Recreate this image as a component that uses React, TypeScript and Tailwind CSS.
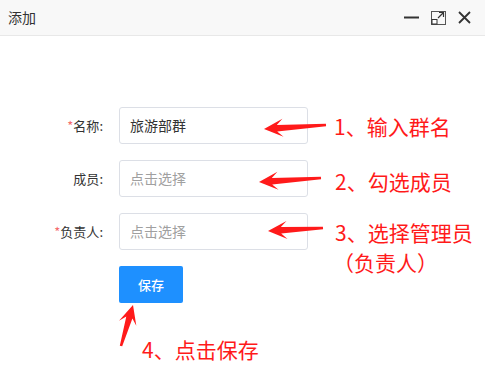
import React from "react";

type Pt = [number, number];

// builds a tapered red annotation arrow from tip to tail
function arrowPoints(tip: Pt, tail: Pt, head = 19, wing = 9, neck = 3.2, end = 1.2) {
  const dx = tail[0] - tip[0];
  const dy = tail[1] - tip[1];
  const len = Math.hypot(dx, dy);
  const ux = dx / len;
  const uy = dy / len;
  const nx = -uy;
  const ny = ux;
  const at = (d: number, s: number): Pt => [tip[0] + ux * d + nx * s, tip[1] + uy * d + ny * s];
  const pts: Pt[] = [
    tip,
    at(head, wing),
    at(head - 6, neck),
    at(len, end),
    at(len, -end),
    at(head - 6, -neck),
    at(head, -wing),
  ];
  return pts.map((p) => p.map((v) => v.toFixed(1)).join(",")).join(" ");
}

const arrows: [Pt, Pt][] = [
  [[264, 129], [326, 125]],
  [[259, 182], [321, 178]],
  [[268, 231], [323, 228]],
  [[133, 305], [121, 346]],
];

function Field({ label, required, value, placeholder }: { label: string; required?: boolean; value?: string; placeholder?: string }) {
  return (
    <div className="flex items-center gap-4 h-[36.5px]">
      <div className="w-[103px] text-right text-[13px] text-[#333]">
        {required && <span className="text-[#f56c6c]">*</span>}
        {label}:
      </div>
      <div className="w-[189px] h-full border border-[#dcdfe6] rounded-[3px] flex items-center px-[10px] text-[14px]">
        {value ? <span className="text-[#333]">{value}</span> : <span className="text-[#a0a0a0]">{placeholder}</span>}
      </div>
    </div>
  );
}

export default function App() {
  return (
    <div
      className="relative w-[485px] h-[391px] bg-white overflow-hidden"
      style={{ fontFamily: '"Noto Sans CJK SC", "Noto Sans", sans-serif' }}
    >
      <div className="h-[36px] bg-[#f8f8f8] border-b border-[#e8e8e8] flex items-center justify-between pl-2 pr-[14px]">
        <span className="text-[14px] text-[#333]">添加</span>
        <div className="flex items-center gap-[12px] text-[#333]">
          <svg width="15" height="15" viewBox="0 0 15 15">
            <path d="M0 7.5H15" stroke="#333" strokeWidth="2" />
          </svg>
          <svg width="15" height="14" viewBox="0 0 15 14">
            <rect x="0.5" y="0.5" width="14" height="13" fill="none" stroke="#555" strokeWidth="1" />
            <rect x="1" y="8.5" width="5" height="4.5" fill="white" stroke="#333" strokeWidth="1" />
            <path d="M7 7L12.5 1.5M8 1.5H12.5V6" fill="none" stroke="#333" strokeWidth="1.2" />
          </svg>
          <svg width="13" height="13" viewBox="0 0 13 13">
            <path d="M1 1L12 12M12 1L1 12" stroke="#333" strokeWidth="1.8" />
          </svg>
        </div>
      </div>

      <div className="flex flex-col gap-[16.5px] pt-[71px]">
        <Field label="名称" required value="旅游部群" />
        <Field label="成员" placeholder="点击选择" />
        <Field label="负责人" required placeholder="点击选择" />
        <div className="pl-[119px]">
          <button className="w-[64px] h-[37px] bg-[#1e90ff] text-white text-[13px] font-medium rounded-[2px]">保存</button>
        </div>
      </div>

      <svg className="absolute inset-0 pointer-events-none" width="485" height="391">
        {arrows.map(([tip, tail], i) => (
          <polygon key={i} points={arrowPoints(tip, tail)} fill="#ff1a1a" />
        ))}
      </svg>

      <div className="absolute inset-0 pointer-events-none text-[21px] leading-[21px] text-[#ff1a1a]">
        <div className="absolute left-[334px] top-[116px]">1、输入群名</div>
        <div className="absolute left-[335px] top-[171px]">2、勾选成员</div>
        <div className="absolute left-[335px] top-[222px]">3、选择管理员</div>
        <div className="absolute left-[333px] top-[252px]">（负责人）</div>
        <div className="absolute left-[142px] top-[339px]">4、点击保存</div>
      </div>
    </div>
  );
}
